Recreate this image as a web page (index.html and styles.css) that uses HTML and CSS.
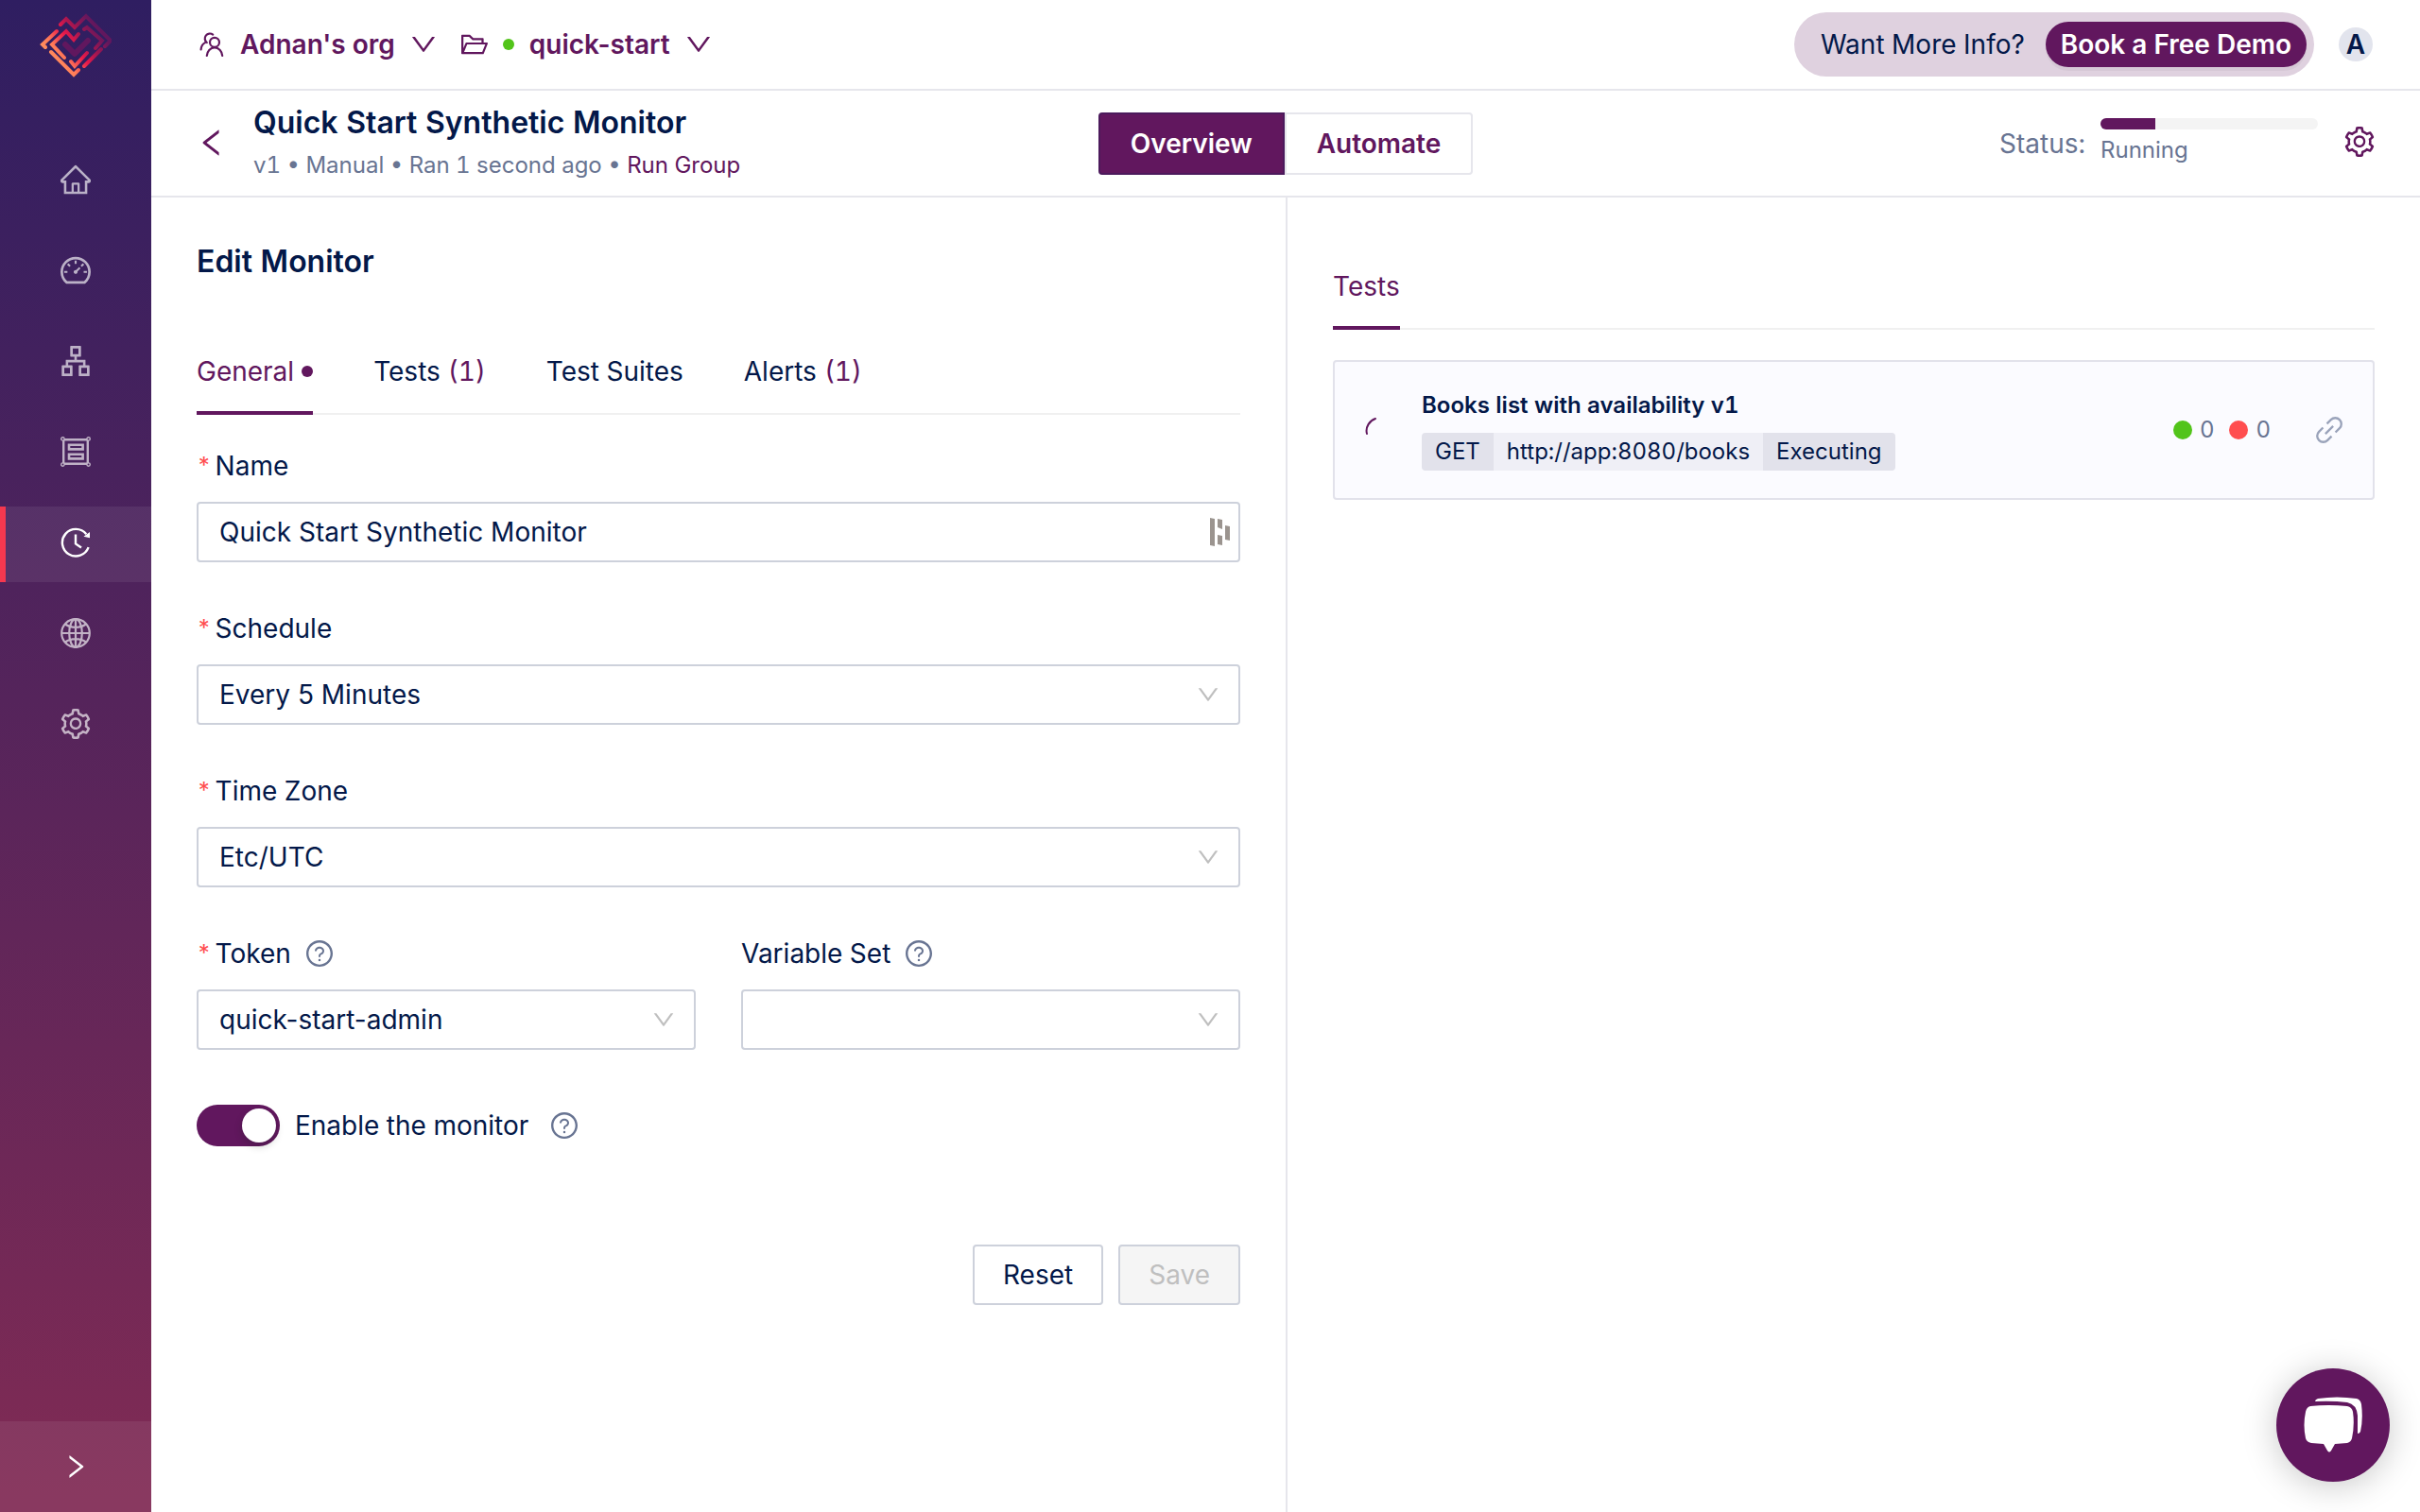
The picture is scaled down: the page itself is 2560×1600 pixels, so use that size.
FILE: index.html
```html
<!DOCTYPE html>
<html lang="en">
<head>
<meta charset="utf-8">
<meta name="viewport" content="width=device-width, initial-scale=1">
<title>Quick Start Synthetic Monitor</title>
<link rel="stylesheet" href="styles.css">
</head>
<body>
<svg class="defs" aria-hidden="true">
  <symbol id="i-home" viewBox="64 64 896 896"><path d="M946.5 505L560.1 118.8l-25.9-25.9a31.5 31.5 0 00-44.4 0L77.5 505a63.9 63.9 0 00-18.8 46c.4 35.2 29.7 63.3 64.9 63.3h42.5V940h691.8V614.3h43.4c17.1 0 33.2-6.7 45.3-18.8a63.6 63.6 0 0018.7-45.3c0-17-6.7-33.1-18.8-45.2zM568 868H456V664h112v204zm217.9-325.7V868H632V640c0-22.1-17.9-40-40-40H432c-22.1 0-40 17.9-40 40v228H238.1V542.3h-96l370-369.7 23.1 23.1L882 542.3h-96.1z"/></symbol>
  <symbol id="i-dash" viewBox="64 64 896 896"><path d="M924.8 385.6a446.7 446.7 0 00-96-142.4 446.7 446.7 0 00-142.4-96C631.1 123.8 572.5 112 512 112s-119.1 11.8-174.4 35.2a446.7 446.7 0 00-142.4 96 446.7 446.7 0 00-96 142.4C75.8 440.9 64 499.5 64 560c0 132.7 58.3 257.7 159.9 343.1l1.7 1.4c5.8 4.8 13.1 7.5 20.6 7.5h531.7c7.5 0 14.8-2.7 20.6-7.5l1.7-1.4C901.7 817.7 960 692.7 960 560c0-60.5-11.9-119.1-35.2-174.4zM761.4 836H262.6A371.12 371.12 0 01140 560c0-99.4 38.7-192.8 109-263 70.3-70.3 163.7-109 263-109 99.4 0 192.8 38.7 263 109 70.3 70.3 109 163.7 109 263 0 105.6-44.5 205.5-122.6 276zM623.5 421.5a8.03 8.03 0 00-11.3 0L527.7 506c-18.7-5-39.4-.2-54.1 14.5a55.95 55.95 0 000 79.2 55.95 55.95 0 0079.2 0 55.87 55.87 0 0014.5-54.1l84.5-84.5c3.1-3.1 3.1-8.2 0-11.3l-28.3-28.3zM490 320h44c4.4 0 8-3.6 8-8v-80c0-4.4-3.6-8-8-8h-44c-4.4 0-8 3.6-8 8v80c0 4.4 3.6 8 8 8zm260 218v44c0 4.4 3.6 8 8 8h80c4.4 0 8-3.6 8-8v-44c0-4.4-3.6-8-8-8h-80c-4.4 0-8 3.6-8 8zm12.7-197.2l-31.1-31.1a8.03 8.03 0 00-11.3 0l-56.6 56.6a8.03 8.03 0 000 11.3l31.1 31.1c3.1 3.1 8.2 3.1 11.3 0l56.6-56.6c3.1-3.1 3.1-8.2 0-11.3zm-458.6-31.1a8.03 8.03 0 00-11.3 0l-31.1 31.1a8.03 8.03 0 000 11.3l56.6 56.6c3.1 3.1 8.2 3.1 11.3 0l31.1-31.1c3.1-3.1 3.1-8.2 0-11.3l-56.6-56.6zM262 530h-80c-4.4 0-8 3.6-8 8v44c0 4.4 3.6 8 8 8h80c4.4 0 8-3.6 8-8v-44c0-4.4-3.6-8-8-8z"/></symbol>
  <symbol id="i-tree" viewBox="64 64 896 896"><path d="M908 640H804V488c0-4.4-3.6-8-8-8H548v-96h108c8.8 0 16-7.2 16-16V80c0-8.8-7.2-16-16-16H368c-8.8 0-16 7.2-16 16v288c0 8.8 7.2 16 16 16h108v96H228c-4.4 0-8 3.6-8 8v152H116c-8.8 0-16 7.2-16 16v288c0 8.8 7.2 16 16 16h288c8.8 0 16-7.2 16-16V656c0-8.8-7.2-16-16-16H292v-88h440v88H620c-8.8 0-16 7.2-16 16v288c0 8.8 7.2 16 16 16h288c8.8 0 16-7.2 16-16V656c0-8.8-7.2-16-16-16zm-564 76v168H176V716h168zm84-408V140h168v168H428zm420 576H680V716h168v168z"/></symbol>
  <symbol id="i-suite" viewBox="0 0 32 32"><g fill="none" stroke="currentColor"><path stroke-width="2.4" d="M3.2 4v24M28.8 4v24M4 3.2h24M4 28.8h24"/><path stroke-width="2.6" d="M9 8.8h14.6v4.6H9zM9 18.8h14.6v4.6H9z"/><g stroke-width="1.4"><circle cx="2.4" cy="2.4" r="1.7"/><circle cx="29.6" cy="2.4" r="1.7"/><circle cx="2.4" cy="29.6" r="1.7"/><circle cx="29.6" cy="29.6" r="1.7"/></g></g></symbol>
  <symbol id="i-time" viewBox="0 0 32 32"><g fill="none" stroke="currentColor" stroke-width="2.4"><path d="M29.6 21.2A14.3 14.3 0 1 1 27.3 7.2"/><path d="M16 7.6v9.8l6 4.2"/></g><path fill="currentColor" d="M31 5v6.2l-6.5-1.4z"/></symbol>
  <symbol id="i-globe" viewBox="0 0 32 32"><g fill="none" stroke="currentColor" stroke-width="2.2"><circle cx="16" cy="16" r="14.8"/><ellipse cx="16" cy="16" rx="6.8" ry="14.8"/><path d="M16 1v30M1 16h30M5 6.5c6 4.4 16 4.4 22 0M5 25.500c6-4.400 16-4.400 22 0"/></g></symbol>
  <symbol id="i-gear" viewBox="64 64 896 896"><path d="M924.8 625.7l-65.5-56c3.1-19 4.7-38.4 4.7-57.8s-1.6-38.8-4.7-57.8l65.5-56a32.03 32.03 0 009.3-35.2l-.9-2.6a443.74 443.74 0 00-79.7-137.9l-1.8-2.1a32.12 32.12 0 00-35.1-9.5l-81.3 28.9c-30-24.6-63.5-44-99.7-57.6l-15.7-85a32.05 32.05 0 00-25.8-25.7l-2.7-.5c-52.1-9.4-106.9-9.4-159 0l-2.7.5a32.05 32.05 0 00-25.8 25.7l-15.8 85.4a351.86 351.86 0 00-99 57.4l-81.9-29.1a32 32 0 00-35.1 9.5l-1.8 2.1a446.02 446.02 0 00-79.7 137.9l-.9 2.6c-4.5 12.5-.8 26.5 9.3 35.2l66.3 56.6c-3.1 18.8-4.6 38-4.6 57.1 0 19.2 1.5 38.4 4.6 57.1L99 625.500a32.03 32.03 0 00-9.3 35.2l.9 2.6c18.1 50.4 44.9 96.9 79.7 137.9l1.8 2.1a32.12 32.12 0 0035.1 9.5l81.9-29.1c29.8 24.5 63.1 43.9 99 57.4l15.8 85.4a32.05 32.05 0 0025.8 25.7l2.7.5a449.4 449.4 0 00159 0l2.7-.5a32.05 32.05 0 0025.8-25.7l15.7-85a350 350 0 0099.7-57.6l81.3 28.9a32 32 0 0035.1-9.5l1.8-2.1c34.8-41.1 61.6-87.5 79.7-137.9l.9-2.6c4.5-12.3.8-26.3-9.3-35zM788.3 465.9c2.5 15.1 3.8 30.6 3.8 46.1s-1.3 31-3.8 46.1l-6.6 40.1 74.7 63.9a370.03 370.03 0 01-42.6 73.6L721 702.8l-31.4 25.8c-23.9 19.6-50.5 35-79.3 45.8l-38.1 14.3-17.9 97a377.5 377.5 0 01-85 0l-17.9-97.2-37.8-14.5c-28.500-10.8-55-26.2-78.7-45.7l-31.4-25.9-93.4 33.2c-17-22.9-31.2-47.6-42.6-73.6l75.5-64.5-6.5-40c-2.4-14.9-3.7-30.3-3.7-45.5 0-15.3 1.2-30.6 3.7-45.5l6.5-40-75.5-64.5c11.3-26.1 25.6-50.7 42.6-73.6l93.4 33.2 31.4-25.9c23.7-19.5 50.2-34.9 78.7-45.7l37.9-14.3 17.9-97.2c28.1-3.2 56.8-3.2 85 0l17.9 97 38.1 14.3c28.7 10.8 55.4 26.2 79.3 45.8l31.4 25.8 92.8-32.9c17 22.9 31.2 47.6 42.6 73.6L781.8 426l6.5 39.9zM512 326c-97.2 0-176 78.8-176 176s78.8 176 176 176 176-78.8 176-176-78.8-176-176-176zm79.2 255.2A111.6 111.6 0 01512 614c-29.9 0-58-11.7-79.2-32.8A111.6 111.6 0 01400 502c0-29.9 11.7-58 32.8-79.2C454 401.6 482.1 390 512 390c29.9 0 58 11.6 79.2 32.8A111.6 111.6 0 01624 502c0 29.9-11.7 58-32.8 79.2z"/></symbol>
  <symbol id="i-down" viewBox="64 64 896 896"><path d="M884 256h-75c-5.1 0-9.9 2.5-12.9 6.6L512 654.2 227.9 262.6c-3-4.1-7.8-6.6-12.9-6.6h-75c-6.5 0-10.3 7.4-6.5 12.7l352.6 486.1c12.8 17.6 39 17.6 51.7 0l352.6-486.1c3.9-5.3.1-12.7-6.4-12.7z"/></symbol>
  <symbol id="i-left" viewBox="64 64 896 896"><path d="M724 218.3V141c0-6.7-7.7-10.4-12.9-6.3L260.3 486.8a31.86 31.86 0 000 50.3l450.8 352.1c5.3 4.1 12.9.4 12.9-6.3v-77.3c0-4.9-2.3-9.6-6.1-12.6l-360-281 360-281.1c3.8-3 6.1-7.7 6.1-12.6z"/></symbol>
  <symbol id="i-right" viewBox="64 64 896 896"><path d="M765.7 486.8L314.9 134.7A7.97 7.97 0 00302 141v77.3c0 4.9 2.3 9.6 6.1 12.6l360 281.1-360 281.1c-3.9 3-6.1 7.7-6.1 12.6V883c0 6.7 7.7 10.4 12.9 6.3l450.8-352.1a31.96 31.96 0 000-50.4z"/></symbol>
  <symbol id="i-help" viewBox="64 64 896 896"><path d="M512 64C264.6 64 64 264.6 64 512s200.6 448 448 448 448-200.6 448-448S759.4 64 512 64zm0 820c-205.4 0-372-166.6-372-372s166.6-372 372-372 372 166.6 372 372-166.6 372-372 372z"/><path d="M623.6 316.7C593.6 290.4 554 276 512 276s-81.6 14.5-111.6 40.7C369.2 344 352 380.7 352 420v7.6c0 4.4 3.6 8 8 8h48c4.4 0 8-3.6 8-8V420c0-44.1 43.1-80 96-80s96 35.9 96 80c0 31.1-22 59.6-56.1 72.7-21.2 8.1-39.2 22.3-52.1 40.9-13.1 19-19.9 41.8-19.9 64.9V620c0 4.4 3.6 8 8 8h48c4.4 0 8-3.6 8-8v-22.7a48.3 48.3 0 0130.9-44.8c59-22.7 97.1-74.7 97.1-132.5.1-39.3-17.1-76-48.3-103.3zM472 732a40 40 0 1080 0 40 40 0 10-80 0z"/></symbol>
  <symbol id="i-folder" viewBox="64 64 896 896"><path d="M928 444H820V330.4c0-17.7-14.3-32-32-32H473L355.7 186.2a8.15 8.15 0 00-5.5-2.2H96c-17.7 0-32 14.3-32 32v592c0 17.7 14.3 32 32 32h698c13 0 24.8-7.9 29.7-20l134-332c1.5-3.8 2.3-7.9 2.3-12 0-17.7-14.3-32-32-32zM136 256h188.5l119.6 114.4H748V444H238c-13 0-24.8 7.9-29.7 20L136 643.2V256zm635.3 512H159l103.3-256h612.4L771.3 768z"/></symbol>
  <symbol id="i-team" viewBox="0 0 28 28"><g fill="none" stroke="currentColor" stroke-width="2.2" stroke-linecap="round"><circle cx="17" cy="11.800" r="5"/><path d="M8.800 26c.3-4.800 3.600-8.600 8.200-8.600s7.900 3.800 8.200 8.600M15.200 3.600A5 5 0 1 0 8.800 12M2.600 19.500c.2-3.400 1.800-6 4.400-7.400"/></g></symbol>
  <symbol id="i-link" viewBox="0 0 24 24"><g fill="none" stroke="currentColor" stroke-width="2" transform="rotate(-45 12 12)"><path d="M9.500 6.500H4.300a5.500 5.500 0 0 0 0 11h5.200M14.500 6.500h5.200a5.500 5.500 0 0 1 0 11h-5.200M7 12h10"/></g></symbol>
</svg>

<div class="app">
  <aside class="sidebar">
    <a class="logo" href="#" aria-label="Home page">
      <svg viewBox="0 0 76 68" width="76" height="68" aria-hidden="true">
        <defs>
          <linearGradient id="lg" gradientUnits="userSpaceOnUse" x1="12" y1="56" x2="62" y2="16">
            <stop offset="0" stop-color="#ff9a60"/><stop offset=".25" stop-color="#ff7a58"/><stop offset=".5" stop-color="#e8194a"/><stop offset=".72" stop-color="#a11650"/><stop offset="1" stop-color="#61175e"/>
          </linearGradient>
        </defs>
        <g fill="none" stroke="url(#lg)" stroke-width="4">
          <path stroke-linecap="round" d="M18 19L3 33l3 3M22 12l6-6 9 9L49 3l26 26-6 6M12 41l24 24 5-5M47 17l3-2 16 14-7 8M26 47L13 33l15-14 8 9 5-6M33 51l4 5 13-14M47 56l18-18"/>
        </g>
        <path fill="none" stroke="#61175e" stroke-width="6" stroke-linecap="round" stroke-linejoin="round" d="M27 33l10 10 14-14"/>
      </svg>
    </a>
    <nav class="nav" aria-label="Main">
      <a href="#" aria-label="Home"><svg class="icon"><use href="#i-home"/></svg></a>
      <a href="#" aria-label="Dashboard"><svg class="icon"><use href="#i-dash"/></svg></a>
      <a href="#" aria-label="Tests"><svg class="icon"><use href="#i-tree"/></svg></a>
      <a href="#" aria-label="Test suites"><svg class="icon"><use href="#i-suite"/></svg></a>
      <a href="#" aria-label="Monitors" class="active" aria-current="page"><svg class="icon"><use href="#i-time"/></svg></a>
      <a href="#" aria-label="Variable sets"><svg class="icon"><use href="#i-globe"/></svg></a>
      <a href="#" aria-label="Settings"><svg class="icon"><use href="#i-gear"/></svg></a>
    </nav>
    <button class="expand" type="button" aria-label="Expand menu"><svg class="icon-m"><use href="#i-right"/></svg></button>
  </aside>

  <div class="main">
    <header class="topbar">
      <button class="picker" type="button"><svg class="icon-m"><use href="#i-team"/></svg><span>Adnan's org</span><svg class="icon-m"><use href="#i-down"/></svg></button>
      <button class="picker" type="button"><svg class="icon-m"><use href="#i-folder"/></svg><i class="dot"></i><span>quick-start</span><svg class="icon-m"><use href="#i-down"/></svg></button>
      <div class="cta"><span>Want More Info?</span><button type="button">Book a Free Demo</button></div>
      <button class="avatar" type="button">A</button>
    </header>

    <header class="subbar">
      <div class="heading">
        <a class="back" href="#" aria-label="Back"><svg class="icon"><use href="#i-left"/></svg></a>
        <div>
          <h1>Quick Start Synthetic Monitor</h1>
          <p>v1 • Manual • Ran 1 second ago • <a href="#">Run Group</a></p>
        </div>
      </div>
      <div class="modes">
        <button type="button" class="on">Overview</button><button type="button">Automate</button>
      </div>
      <div class="status">
        <span>Status:</span>
        <div class="run">
          <div class="bar"><div class="fill" style="width:25%"></div></div>
          <span>Running</span>
        </div>
        <button class="gear" type="button" aria-label="Monitor settings"><svg class="icon"><use href="#i-gear"/></svg></button>
      </div>
    </header>

    <div class="panels">
      <section class="panel edit">
        <h2>Edit Monitor</h2>
        <nav class="tabs">
          <a href="#" class="on">General<i class="mark"></i></a>
          <a href="#">Tests <b>(1)</b></a>
          <a href="#">Test Suites</a>
          <a href="#">Alerts <b>(1)</b></a>
        </nav>
        <form class="form">
          <div class="field">
            <label for="name"><em>*</em>Name</label>
            <div class="control">
              <input id="name" type="text" value="Quick Start Synthetic Monitor">
              <svg class="vault" viewBox="0 0 22 30" aria-hidden="true"><path fill="#9b948f" d="M0 0l5 1v29l-5-1zM8 1l5 1v10l-5-2zM8 18l5 1v10l-5-1zM16 8l5 1v15l-5-1z"/></svg>
            </div>
          </div>
          <div class="field">
            <label for="schedule"><em>*</em>Schedule</label>
            <div class="control"><select id="schedule"><option>Every 5 Minutes</option></select><svg class="caret"><use href="#i-down"/></svg></div>
          </div>
          <div class="field">
            <label for="zone"><em>*</em>Time Zone</label>
            <div class="control"><select id="zone"><option>Etc/UTC</option></select><svg class="caret"><use href="#i-down"/></svg></div>
          </div>
          <div class="pair">
            <div class="field">
              <label for="token"><em>*</em>Token<svg class="help"><use href="#i-help"/></svg></label>
              <div class="control"><select id="token"><option>quick-start-admin</option></select><svg class="caret"><use href="#i-down"/></svg></div>
            </div>
            <div class="field">
              <label for="vars">Variable Set<svg class="help"><use href="#i-help"/></svg></label>
              <div class="control"><select id="vars"><option></option></select><svg class="caret"><use href="#i-down"/></svg></div>
            </div>
          </div>
          <div class="toggle">
            <input id="enable" type="checkbox" role="switch" checked>
            <label for="enable">Enable the monitor</label>
            <svg class="help"><use href="#i-help"/></svg>
          </div>
          <div class="actions">
            <button type="reset">Reset</button>
            <button type="submit" disabled>Save</button>
          </div>
        </form>
      </section>

      <section class="panel results">
        <nav class="tabs"><a href="#" class="on">Tests</a></nav>
        <article class="card">
          <svg class="spinner" viewBox="0 0 28 28" aria-hidden="true"><path fill="none" stroke="#61175e" stroke-width="2" stroke-linecap="round" d="M2 18C0 11 5 4 11 2"/></svg>
          <div class="info">
            <h3>Books list with availability v1</h3>
            <div class="tags"><span>GET</span><span class="url">http://app:8080/books</span><span>Executing</span></div>
          </div>
          <div class="counts">
            <i class="ball pass"></i><span>0</span><i class="ball fail"></i><span>0</span>
          </div>
          <a class="link" href="#" aria-label="Open test"><svg><use href="#i-link"/></svg></a>
        </article>
      </section>
    </div>
  </div>
</div>

<button class="chat" type="button" aria-label="Open chat">
  <svg viewBox="0 0 62 60" width="62" height="60" aria-hidden="true"><path fill="#fff" d="M7 10Q26 8 46 10 51 11 52 16 54 30 51 44 50 48 46 49L33 50 29 57Q27 60 25 57L21 50 8 49Q3 48 2 44-1 30 2 16 3 11 7 10zM12 5Q12 3 15 2 35-1 56 2 60 3 61 8 63 24 60 37 59 39 57 39L57 20Q56 8 46 6 30 4 12 5z"/></svg>
</button>
</body>
</html>
```
FILE: styles.css
```css
:root {
  --brand: #61175e;
  --ink: #031849;
  --muted: #687492;
  --line: #e6e6ec;
  --field: #cdd1db;
}

* { box-sizing: border-box; }

body {
  margin: 0;
  background: #fff;
  color: var(--ink);
  font: 400 28px/44px Inter, "Liberation Sans", sans-serif;
  font-variant-numeric: tabular-nums;
}

h1, h2, h3, p { margin: 0; }
h1, h2 { font-size: 32px; font-weight: 600; }
h2 { line-height: 48px; }
a { color: inherit; text-decoration: none; }
button, input, select { font: inherit; font-variant-numeric: normal; color: inherit; margin: 0; }
button { border: 0; background: none; padding: 0; cursor: pointer; }
svg { display: block; flex: none; fill: currentColor; }

.defs { position: absolute; width: 0; height: 0; }
.icon { width: 32px; height: 32px; }
.icon-m { width: 28px; height: 28px; }

.app { display: flex; min-height: 100vh; }

/* Sidebar */
.sidebar {
  flex: none;
  width: 160px;
  display: flex;
  flex-direction: column;
  color: #fff;
  background: linear-gradient(180deg, #2f1e61, #812b54);
}
.logo {
  display: flex;
  justify-content: center;
  padding-top: 14px;
  height: 152px;
}
.nav { display: flex; flex-direction: column; gap: 16px; }
.nav a {
  height: 80px;
  padding-bottom: 4px;
  display: grid;
  place-items: center;
}
.nav .icon { opacity: .65; }
.nav .active {
  background: rgba(255, 255, 255, .07);
  box-shadow: inset 6px 0 #f5384f;
}
.nav .active .icon { opacity: 1; }
.expand {
  height: 96px;
  margin-top: auto;
  display: grid;
  place-items: center;
  background: rgba(255, 255, 255, .07);
}

/* Headers */
.main { flex: 1; min-width: 0; display: flex; flex-direction: column; }
.topbar {
  height: 96px;
  display: flex;
  align-items: center;
  gap: 26px;
  padding: 0 50px;
  border-bottom: 2px solid var(--line);
  color: var(--brand);
  font-weight: 600;
}
.picker { display: flex; align-items: center; gap: 16px; font-weight: 600; }
.dot { width: 12px; height: 12px; border-radius: 50%; background: #52c41a; }
.cta {
  display: flex;
  align-items: center;
  gap: 22px;
  margin-left: auto;
  height: 68px;
  padding: 0 8px 0 28px;
  border-radius: 34px;
  background: #dfd1df;
  color: var(--ink);
  font-weight: 400;
}
.cta button {
  height: 48px;
  padding: 0 16px;
  border-radius: 24px;
  background: var(--brand);
  color: #fff;
  font-weight: 600;
  box-shadow: 0 4px 0 rgba(0, 0, 0, .04);
}
.avatar {
  width: 36px;
  height: 36px;
  line-height: 36px;
  border-radius: 50%;
  background: #e2e4ed;
  color: var(--ink);
  font-weight: 600;
}

.subbar {
  height: 113px;
  display: grid;
  grid-template-columns: 1fr auto 1fr;
  align-items: center;
  padding: 0 48px;
  border-bottom: 2px solid var(--line);
}
.heading { display: flex; align-items: center; gap: 28px; padding-bottom: 2px; }
.heading h1 { line-height: 48px; }
.heading p { font-size: 24px; line-height: 42px; color: var(--muted); }
.heading a { color: var(--brand); }
.modes { display: flex; }
.modes button {
  height: 66px;
  padding: 0 32px;
  border: 2px solid var(--line);
  border-radius: 0 4px 4px 0;
  color: var(--brand);
  font-weight: 600;
}
.modes .on {
  border-color: #4c1a5c;
  border-radius: 4px 0 0 4px;
  background: var(--brand);
  color: #fff;
}
.status {
  display: flex;
  align-items: center;
  justify-content: flex-end;
  gap: 16px;
  color: var(--muted);
}
.run { width: 230px; padding-top: 2px; font-size: 24px; }
.run span { display: block; }
.bar { height: 12px; border-radius: 6px; background: #f4f4f4; overflow: hidden; }
.fill { height: 100%; background: var(--brand); }
.gear { margin-left: 12px; padding-bottom: 4px; color: var(--brand); }

/* Panels */
.panels { flex: 1; display: grid; grid-template-columns: 1fr 1fr; }
.panel { padding: 44px 48px 0; }
.results { padding-top: 48px; border-left: 2px solid var(--line); }

.tabs { display: flex; gap: 64px; border-bottom: 2px solid #f0f0f0; }
.tabs a {
  display: flex;
  align-items: center;
  gap: 8px;
  padding: 24px 0 20px;
  margin-bottom: -2px;
  border-bottom: 4px solid transparent;
}
.tabs .on { color: var(--brand); border-color: var(--brand); }
.tabs b { font-weight: 400; color: var(--brand); }
.mark { width: 12px; height: 12px; border-radius: 50%; background: var(--brand); }

.edit .tabs { margin-top: 46px; }

.form { display: flex; flex-direction: column; gap: 48px; padding-top: 32px; }
.pair { display: grid; grid-template-columns: 1fr 1fr; gap: 48px; }
.field label { display: flex; align-items: center; margin-bottom: 16px; }
.field em {
  margin-right: 4px;
  color: #ff4d4f;
  font-size: 24px;
  font-style: normal;
}
.help { width: 28px; height: 28px; margin-left: 16px; color: var(--muted); }
.control { position: relative; }
.control input, .control select {
  display: block;
  width: 100%;
  height: 64px;
  padding: 0 22px;
  border: 2px solid var(--field);
  border-radius: 4px;
  background: #fff;
  appearance: none;
}
.caret, .vault { position: absolute; pointer-events: none; }
.caret { right: 22px; top: 20px; width: 24px; height: 24px; color: #bfbfbf; }
.vault { right: 10px; top: 17px; width: 22px; height: 30px; }

.toggle { display: flex; align-items: center; padding-top: 10px; }
.toggle input {
  appearance: none;
  width: 88px;
  height: 44px;
  margin-right: 16px;
  padding: 4px;
  border-radius: 22px;
  background: var(--brand);
}
.toggle input::before {
  content: "";
  display: block;
  width: 36px;
  height: 36px;
  margin-left: auto;
  border-radius: 50%;
  background: #fff;
  box-shadow: 0 4px 8px rgba(0, 35, 11, .2);
}
.toggle .help { margin-left: 24px; }

.actions { display: flex; justify-content: flex-end; gap: 16px; padding-top: 56px; }
.actions button {
  height: 64px;
  padding: 0 30px;
  border: 2px solid var(--field);
  border-radius: 4px;
}
.actions button:disabled { background: #f5f5f5; color: #bfbfbf; }

.card {
  display: flex;
  align-items: center;
  height: 148px;
  margin-top: 32px;
  padding: 0 32px;
  border: 2px solid #e2e2eb;
  border-radius: 4px;
  background: #fbfbff;
}
.spinner { width: 28px; height: 28px; }
.info { margin-left: 32px; padding-bottom: 3px; }
.card h3 { font-size: 24px; line-height: 40px; font-weight: 600; margin-bottom: 9px; }
.tags { display: flex; font-size: 24px; line-height: 40px; border-radius: 4px; overflow: hidden; }
.tags span { padding: 0 14px; background: #e2e2eb; }
.tags .url { background: #efeff6; }
.counts {
  display: flex;
  align-items: center;
  gap: 8px;
  margin-left: auto;
  font-size: 24px;
  color: var(--muted);
}
.ball { width: 20px; height: 20px; border-radius: 50%; }
.pass { background: #52c41a; }
.fail { background: #ff4d4f; margin-left: 8px; }
.link { margin-left: 48px; color: #9aa3ba; }
.link svg { width: 28px; height: 28px; }

.chat {
  position: fixed;
  right: 32px;
  bottom: 32px;
  width: 120px;
  height: 120px;
  display: grid;
  place-items: center;
  border-radius: 50%;
  background: var(--brand);
  box-shadow: 0 4px 36px rgba(0, 0, 0, .22);
}
```
